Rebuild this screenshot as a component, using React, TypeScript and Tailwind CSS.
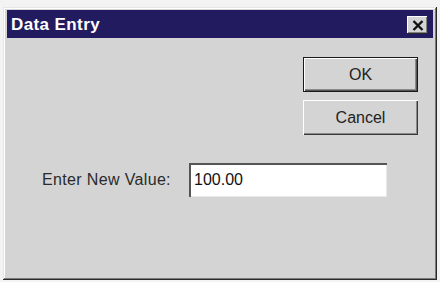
import React from "react";

export default function App() {
  return (
    <div
      className="w-[440px] h-[282px] bg-[#f3f3f3] pt-[7px] pl-[3px] overflow-hidden"
      style={{ fontFamily: '"Liberation Sans", Arial, sans-serif' }}
    >
      <div className="w-[434px] h-[273px] bg-[#d4d4d4] flex flex-col p-[4px] pt-[3px] shadow-[inset_-1px_-1px_#2a2a2a,inset_1px_1px_#e6e6e6,inset_-2px_-2px_#7a7a7a,inset_2px_2px_#ffffff]">
        <div className="h-[28px] bg-[#221b5f] flex items-center justify-between pl-[4px] pr-[5px]">
          <span className="text-white font-bold text-[17px] leading-none tracking-[0.4px]">Data Entry</span>
          <div className="w-[21px] h-[18px] mt-[2px] bg-[#d4d4d4] flex items-center justify-center shadow-[inset_-1px_-1px_#2a2a2a,inset_1px_1px_#ffffff,inset_-2px_-2px_#808080]">
            <svg width="12" height="11" viewBox="0 0 12 11">
              <path d="M1.5 1 L10.5 10 M10.5 1 L1.5 10" stroke="#111" strokeWidth="2.4" />
            </svg>
          </div>
        </div>
        <div className="flex flex-col flex-1">
          <div className="flex flex-col items-end pr-[15px] pt-[19px] gap-[8px]">
            <div className="w-[115px] h-[35px] border border-[#1a1a1a] flex items-center justify-center text-[16px] text-[#222] shadow-[inset_1px_1px_#ffffff,inset_-1px_-1px_#555555,inset_-2px_-2px_#8a8a8a]">
              OK
            </div>
            <div className="w-[115px] h-[35px] flex items-center justify-center text-[16px] text-[#222] shadow-[inset_1px_1px_#ffffff,inset_-1px_-1px_#3a3a3a,inset_-2px_-2px_#8a8a8a]">
              Cancel
            </div>
          </div>
          <div className="flex items-center pt-[28px] pl-[35px]">
            <span className="text-[16px] text-[#2a2a2a] w-[147px] tracking-[0.35px]">Enter New Value:</span>
            <div className="w-[198px] h-[34px] bg-white flex items-center pl-[5px] text-[16px] text-[#111] shadow-[inset_2px_2px_#555555,inset_-1px_-1px_#e8e8e8]">
              100.00
            </div>
          </div>
        </div>
      </div>
    </div>
  );
}
